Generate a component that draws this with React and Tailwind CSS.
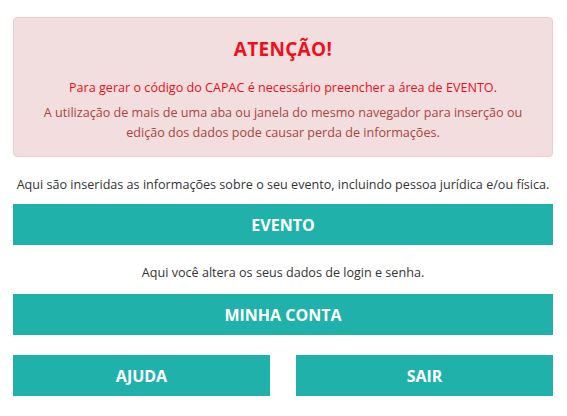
export default function App() {
  return (
    <div className="min-h-[416px] bg-white pt-[17px] pl-[13px] pr-[14px]" style={{ fontFamily: '"Open Sans", sans-serif' }}>
      <div className="h-[140px] rounded-[4px] border border-[#ebccd1] bg-[#f2dede] text-center pt-[19px]">
        <div className="text-[19px] leading-[24px] font-bold text-[#ee0f1c] tracking-[0.3px]">ATENÇÃO!</div>
        <p className="mt-[17px] text-[12.6px] leading-[20px] text-[#e8101a]">
          Para gerar o código do CAPAC é necessário preencher a área de EVENTO.
        </p>
        <p className="mt-[5px] text-[12.6px] leading-[20px] text-[#a94442] px-[20px]">
          A utilização de mais de uma aba ou janela do mesmo navegador para inserção ou edição dos dados pode causar perda de informações.
        </p>
      </div>
      <p className="mt-[18px] text-center text-[12.6px] leading-[20px] text-[#333333] whitespace-nowrap">
        Aqui são inseridas as informações sobre o seu evento, incluindo pessoa jurídica e/ou física.
      </p>
      <button className="mt-[9px] flex h-[41px] w-full items-center justify-center bg-[#20b2aa] text-[16px] font-bold text-white">
        EVENTO
      </button>
      <p className="mt-[18px] text-center text-[12.6px] leading-[20px] text-[#333333]">
        Aqui você altera os seus dados de login e senha.
      </p>
      <button className="mt-[11px] flex h-[41px] w-full items-center justify-center bg-[#20b2aa] text-[16px] font-bold text-white">
        MINHA CONTA
      </button>
      <div className="mt-[20px] grid grid-cols-2 gap-[26px]">
        <button className="flex h-[41px] items-center justify-center bg-[#20b2aa] text-[16px] font-bold text-white">
          AJUDA
        </button>
        <button className="flex h-[41px] items-center justify-center bg-[#20b2aa] text-[16px] font-bold text-white">
          SAIR
        </button>
      </div>
    </div>
  );
}
